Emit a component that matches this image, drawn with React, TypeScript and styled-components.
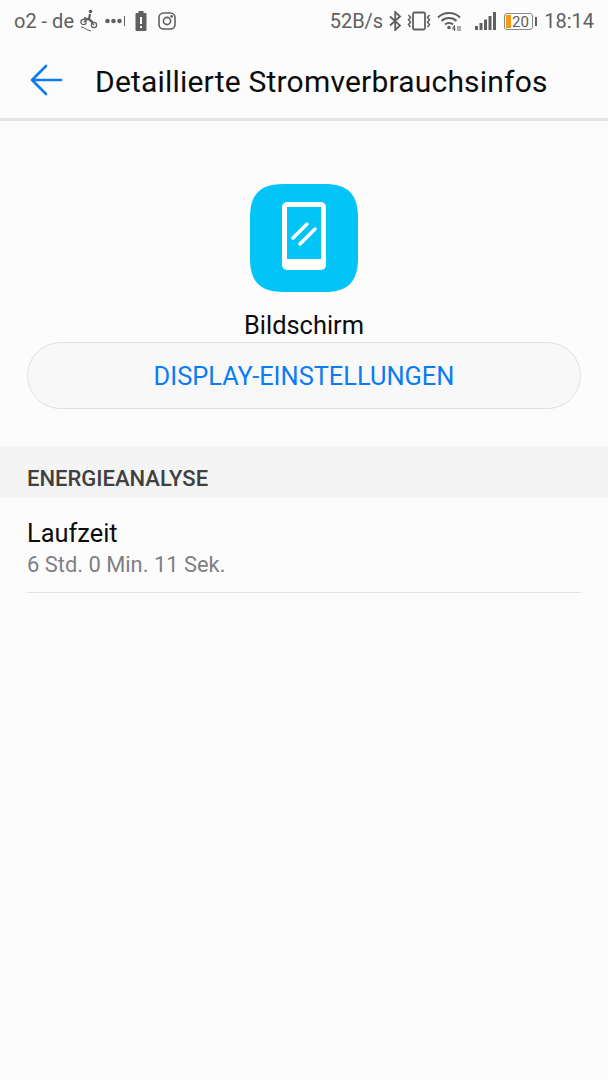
import styled, { createGlobalStyle } from "styled-components";

const GlobalStyle = createGlobalStyle`
  html, body {
    margin: 0;
    padding: 0;
    background-color: #fcfcfc;
    font-family: Roboto, "Noto Sans", sans-serif;
  }
`;

const Screen = styled.div`
  width: 608px;
  height: 1080px;
  overflow: hidden;
  display: flex;
  flex-direction: column;
  background-color: #fcfcfc;
`;

const StatusBar = styled.div`
  height: 42px;
  padding: 0 14px;
  display: flex;
  align-items: center;
  justify-content: space-between;
  color: #606060;
  font-size: 20px;
  box-sizing: border-box;
`;

const StatusGroup = styled.div`
  display: flex;
  align-items: center;
`;

const StatusText = styled.span<{ $mr?: number }>`
  margin-right: ${p => p.$mr ?? 0}px;
  line-height: 42px;
`;

const Icon = styled.svg<{ $mr?: number }>`
  display: block;
  flex: none;
  margin-right: ${p => p.$mr ?? 0}px;
`;

const Header = styled.header`
  height: 76px;
  padding-left: 30px;
  display: flex;
  align-items: center;
  gap: 32px;
  border-bottom: 3px solid #e4e4e4;
`;

const Title = styled.h1`
  margin: 2px 0 0;
  font-size: 30px;
  font-weight: 400;
  color: #0c0c0c;
  letter-spacing: 0.2px;
`;

const Hero = styled.div`
  display: flex;
  flex-direction: column;
  align-items: center;
  padding: 63px 27px 0;
`;

const AppName = styled.div`
  margin-top: 18px;
  font-size: 25.4px;
  line-height: 30px;
  color: #0c0c0c;
`;

const ActionButton = styled.button`
  width: 100%;
  height: 67px;
  margin-top: 2px;
  border: 1.5px solid #e0e0e0;
  border-radius: 34px;
  background-color: #f8f8f8;
  color: #0a7cf5;
  font-family: inherit;
  font-size: 25.4px;
`;

const SectionHead = styled.div`
  height: 40px;
  margin-top: 37px;
  padding: 12px 27px 0;
  display: flex;
  align-items: center;
  background-color: #f4f4f4;
  color: #404040;
  font-size: 22px;
  font-weight: 500;
`;

const Row = styled.div`
  margin: 0 27px;
  height: 95px;
  box-sizing: border-box;
  padding-top: 19px;
  border-bottom: 1px solid #e4e4e4;
`;

const RowTitle = styled.div`
  font-size: 25.4px;
  line-height: 33px;
  color: #0c0c0c;
`;

const RowSub = styled.div`
  font-size: 21.9px;
  line-height: 30px;
  color: #808080;
`;

function BikeIcon() {
  return (
    <Icon width="18" height="24" viewBox="0 0 18 24" $mr={7} fill="none" stroke="#606060" strokeWidth="1.3">
      <circle cx="3.500" cy="13" r="2.600" />
      <circle cx="14" cy="16" r="2.600" />
      <path d="M3.500 13l5-3 5.500 6" />
      <path d="M4 9l5 1.500" strokeWidth="2" />
      <circle cx="10.500" cy="2.500" r="1.800" fill="#606060" stroke="none" />
      <path d="M10 5l-1 5 3.500 3" strokeWidth="2.200" />
      <path d="M1 18c3 0 5 3 10 4" strokeWidth="1" />
    </Icon>
  );
}

function App() {
  return (
    <Screen>
      <GlobalStyle />
      <StatusBar>
        <StatusGroup>
          <StatusText $mr={6}>o2 - de</StatusText>
          <BikeIcon />
          <Icon width="20" height="14" viewBox="0 0 20 14" $mr={10}>
            <circle cx="2.500" cy="7" r="2.300" fill="#606060" />
            <circle cx="8.500" cy="7" r="2.300" fill="#606060" />
            <circle cx="14.500" cy="7" r="2.300" fill="#606060" />
            <rect x="19" y="2" width="1" height="10" fill="#606060" />
          </Icon>
          <Icon width="12" height="20" viewBox="0 0 12 20" $mr={11}>
            <rect x="3.500" y="0" width="5" height="3" fill="#606060" />
            <rect x="0.500" y="2" width="11" height="18" rx="1" fill="#606060" />
            <rect x="5" y="6" width="2" height="7" fill="#fff" />
            <rect x="5" y="15" width="2" height="2" fill="#fff" />
          </Icon>
          <Icon width="18" height="18" viewBox="0 0 18 18" fill="none" stroke="#606060" strokeWidth="1.6">
            <rect x="1" y="1" width="16" height="16" rx="4.500" />
            <circle cx="9" cy="9" r="3.600" />
            <circle cx="13.600" cy="4.400" r="0.600" fill="#606060" />
          </Icon>
        </StatusGroup>
        <StatusGroup>
          <StatusText $mr={6}>52B/s</StatusText>
          <Icon width="13" height="20" viewBox="0 0 13 20" $mr={5} fill="none" stroke="#606060" strokeWidth="1.8">
            <path d="M1 5.500l10 9-4.800 4.500V1L11 5.500l-10 9" />
          </Icon>
          <Icon width="24" height="20" viewBox="0 0 24 20" $mr={6} fill="none" stroke="#606060" strokeWidth="1.800">
            <rect x="6" y="1.500" width="12" height="17" rx="1.500" />
            <path d="M1.500 4l2 2.400-2 2.400 2 2.400-2 2.400 2 2.400M22.500 4l-2 2.400 2 2.400-2 2.400 2 2.400-2 2.400" strokeWidth="1.500" />
          </Icon>
          <Icon width="24" height="20" viewBox="0 0 24 20" $mr={14} fill="none" stroke="#606060" strokeWidth="2">
            <path d="M1 6.500c6-6 16-6 22 0M4.500 10c4-4 11-4 15 0M8 13.500c2-2 6-2 8 0" />
            <circle cx="12" cy="16.500" r="1.800" fill="#606060" stroke="none" />
            <path d="M17 15l-1.500 3h3M17.500 14v6M21 15v5M23 15v5" strokeWidth="1" />
          </Icon>
          <Icon width="21" height="20" viewBox="0 0 21 20" $mr={8}>
            <rect x="0" y="15" width="3" height="4" fill="#606060" />
            <rect x="4.500" y="12" width="3" height="7" fill="#606060" />
            <rect x="9" y="8.500" width="3" height="10.500" fill="#606060" />
            <rect x="13.500" y="5" width="3" height="14" fill="#606060" />
            <rect x="18" y="1" width="3" height="18" fill="#606060" />
          </Icon>
          <Icon width="33" height="17" viewBox="0 0 33 17" $mr={7} fill="none">
            <rect x="0.500" y="0.500" width="28" height="16" rx="2.500" stroke="#8a8a8a" />
            <rect x="2" y="2" width="5" height="13" fill="#f59a14" />
            <rect x="31" y="4" width="2" height="9" fill="#606060" />
            <text x="8" y="14" fontSize="15" fontFamily="Roboto, sans-serif" fill="#606060">20</text>
          </Icon>
          <StatusText>18:14</StatusText>
        </StatusGroup>
      </StatusBar>
      <Header>
        <Icon width="33" height="32" viewBox="0 0 33 32" fill="none" stroke="#0a7cf5" strokeWidth="2.600" strokeLinecap="round" strokeLinejoin="round">
          <path d="M2 16h29M16 2L2 16l14 14" />
        </Icon>
        <Title>Detaillierte Stromverbrauchsinfos</Title>
      </Header>
      <Hero>
        <Icon width="108" height="108" viewBox="0 0 108 108">
          <path d="M34 0h40c24 0 34 10 34 34v40c0 24-10 34-34 34H34C10 108 0 98 0 74V34C0 10 10 0 34 0z" fill="#02c4f7" />
          <path fillRule="evenodd" d="M37 18h34a5 5 0 0 1 5 5v58a5 5 0 0 1-5 5H37a5 5 0 0 1-5-5V23a5 5 0 0 1 5-5zm0 5v52h34V23z" fill="#fff" />
          <path d="M43 54l14-14M50 60l15-15" stroke="#fff" strokeWidth="3.500" strokeLinecap="round" />
        </Icon>
        <AppName>Bildschirm</AppName>
        <ActionButton>DISPLAY-EINSTELLUNGEN</ActionButton>
      </Hero>
      <SectionHead>ENERGIEANALYSE</SectionHead>
      <Row>
        <RowTitle>Laufzeit</RowTitle>
        <RowSub>6 Std. 0 Min. 11 Sek.</RowSub>
      </Row>
    </Screen>
  );
}

export default App;
